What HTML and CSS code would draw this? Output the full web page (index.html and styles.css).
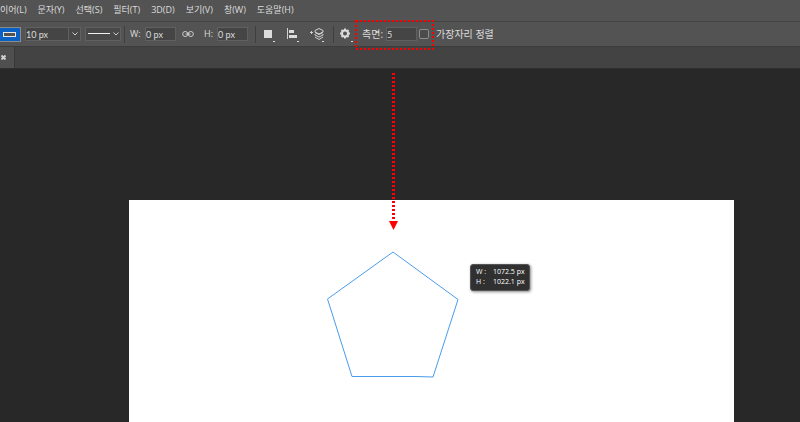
FILE: index.html
```html
<!DOCTYPE html>
<html lang="ko">
<head>
    <meta charset="UTF-8">
    <meta name="viewport" content="width=device-width, initial-scale=1.0">
    <title>다각형 도구</title>
    <link rel="stylesheet" href="styles.css">
</head>
<body>
    <nav class="menu-bar">
        <a href="#">이어(L)</a>
        <a href="#">문자(Y)</a>
        <a href="#">선택(S)</a>
        <a href="#">필터(T)</a>
        <a href="#">3D(D)</a>
        <a href="#">보기(V)</a>
        <a href="#">창(W)</a>
        <a href="#">도움말(H)</a>
    </nav>

    <div class="options-bar">
        <button class="stroke-swatch" aria-label="획"><span></span></button>
        <div class="combo">
            <input class="field" type="text" value="10 px" aria-label="획 폭">
            <button class="combo-arrow" aria-label="열기">
                <svg width="6" height="4" viewBox="0 0 6 4"><path d="M0.5 0.5 L3 3 L5.5 0.5"/></svg>
            </button>
        </div>
        <div class="line-style">
            <select aria-label="획 유형"><option></option></select>
            <svg width="31" height="8" viewBox="0 0 31 8">
                <path class="line" d="M0 3.500 H22"/>
                <path d="M25.500 2.500 L28 5 L30.500 2.500"/>
            </svg>
        </div>
        <div class="separator"></div>
        <label for="width">W:</label>
        <input class="field size" id="width" type="text" value="0 px">
        <button class="icon link" aria-label="연결">
            <svg width="12" height="8" viewBox="0 0 12 8">
                <rect x="0.700" y="1.500" width="5" height="5" rx="2.400"/>
                <rect x="6.300" y="1.500" width="5" height="5" rx="2.400"/>
                <path d="M3.500 4 H8.500"/>
            </svg>
        </button>
        <label for="height">H:</label>
        <input class="field size" id="height" type="text" value="0 px">
        <div class="separator"></div>
        <div class="tools">
            <button class="icon" aria-label="패스 작업">
                <svg width="14" height="16" viewBox="0 0 14 16">
                    <rect class="fill" x="2" y="4" width="8" height="8"/>
                    <rect class="fill" x="11" y="15" width="2" height="1"/>
                </svg>
            </button>
            <button class="icon" aria-label="패스 정렬">
                <svg width="14" height="16" viewBox="0 0 14 16">
                    <path d="M1.500 2 V13"/>
                    <rect class="fill" x="3" y="4" width="5" height="3"/>
                    <rect class="fill" x="3" y="9" width="8" height="3"/>
                    <rect class="fill" x="11" y="15" width="2" height="1"/>
                </svg>
            </button>
            <button class="icon" aria-label="패스 배열">
                <svg width="15" height="16" viewBox="0 0 15 16">
                    <path d="M0 6.500 H3 M1.500 5 V8"/>
                    <path d="M5 4.500 L9 2.500 L13 4.500 V6 L9 8 L5 6 Z"/>
                    <path d="M5 8 V9 L9 11 L13 9 V8 M5 11 L9 13.500 L13 11"/>
                    <path class="fill" d="M5 6 L9 8 L13 6 V7 L9 9 L5 7 Z"/>
                    <rect class="fill" x="12" y="15" width="2" height="1"/>
                </svg>
            </button>
        </div>
        <div class="separator"></div>
        <button class="icon gear" aria-label="설정">
            <svg width="14" height="16" viewBox="0 0 14 16">
                <circle class="ring" cx="6" cy="7.500" r="3"/>
                <path class="teeth" d="M6 2.500 V4 M6 11 V12.500 M1 7.500 H2.500 M9.500 7.500 H11 M2.500 4 L3.500 5 M8.500 10 L9.500 11 M9.500 4 L8.500 5 M3.500 10 L2.500 11"/>
                <rect class="fill" x="12" y="15" width="2" height="1"/>
            </svg>
        </button>
        <div class="sides">
            <label for="sides">측면:</label>
            <input class="field size" id="sides" type="text" value="5">
            <input class="check" id="edges" type="checkbox">
            <svg class="highlight" width="80" height="30" viewBox="0 0 80 30">
                <rect x="1" y="1" width="77" height="28"/>
            </svg>
        </div>
        <label class="wide" for="edges">가장자리 정렬</label>
    </div>

    <div class="tab-bar">
        <button class="tab" aria-label="닫기">
            <svg width="5" height="5" viewBox="0 0 5 5"><path d="M0.500 0.500 L4.500 4.500 M4.500 0.500 L0.500 4.500"/></svg>
        </button>
    </div>

    <main class="workspace">
        <div class="artboard">
            <svg class="polygon" width="134" height="128" viewBox="0 0 134 128">
                <path d="M67 1 L132 48.500 L107 126 L90 125.500 L26 125.500 L1.500 48 Z"/>
            </svg>
            <dl class="size-tip">
                <dt>W :</dt><dd>1072.5 px</dd>
                <dt>H :</dt><dd>1022.1 px</dd>
            </dl>
        </div>
        <svg class="arrow" width="10" height="160" viewBox="0 0 10 160">
            <path class="shaft" d="M4.500 3 V151"/>
            <path class="head" d="M0 151 H9 L4.500 160 Z"/>
        </svg>
    </main>
</body>
</html>
```

FILE: styles.css
```css
* {
    box-sizing: border-box;
}

body {
    margin: 0;
    height: 100vh;
    display: flex;
    flex-direction: column;
    overflow: hidden;
    background: #282828;
    color: #dcdcdc;
    font-family: "Open Sans", "Noto Sans CJK KR", sans-serif;
    font-size: 9px;
    line-height: 14px;
}

button,
input,
select {
    margin: 0;
    padding: 0;
    border: none;
    border-radius: 0;
    background: none;
    color: inherit;
    font: inherit;
}

svg {
    display: block;
    fill: none;
    stroke: #cfcfcf;
}

.fill {
    fill: #dcdcdc;
    stroke: none;
}

.menu-bar {
    height: 21px;
    padding-bottom: 2px;
    display: flex;
    align-items: center;
    gap: 11px;
    background: #535353;
    white-space: nowrap;
}

.menu-bar a {
    color: inherit;
    text-decoration: none;
}

.options-bar {
    height: 26px;
    display: flex;
    align-items: center;
    background: #535353;
    border-top: 1px solid #434343;
    border-bottom: 1px solid #3c3c3c;
    white-space: nowrap;
}

.stroke-swatch {
    width: 21px;
    height: 15px;
    border: 1px solid #8a8a8a;
    border-left: none;
    background: #0a61c4;
}

.stroke-swatch span {
    display: block;
    width: 13px;
    height: 5px;
    margin-left: 3px;
    border: 1px solid #e6e6e6;
    background: #535353;
}

.field {
    height: 14px;
    border: 1px solid #606060;
    background: #454545;
    font-family: Lato, sans-serif;
    line-height: 12px;
}

.size {
    width: 31px;
}

.combo {
    display: flex;
    margin: 0 4px;
}

.combo .field {
    width: 44px;
}

.combo-arrow {
    width: 12px;
    height: 14px;
    padding-left: 3px;
    border: 1px solid #606060;
    border-left: none;
    background: #484848;
}

.line-style {
    position: relative;
    width: 36px;
    height: 14px;
}

.line-style select {
    display: block;
    width: 100%;
    height: 100%;
    appearance: none;
    border: 1px solid #606060;
    background: #484848;
}

.line-style svg {
    position: absolute;
    top: 3px;
    left: 3px;
    pointer-events: none;
}

.line-style .line {
    stroke: #f0f0f0;
}

.separator {
    width: 1px;
    height: 17px;
    margin: 0 5px 0 3px;
    background: #3f3f3f;
}

label[for="width"] {
    width: 15px;
}

label[for="height"] {
    width: 13px;
}

.link {
    margin: 0 10px 0 6px;
}

#height {
    margin-right: 4px;
}

.tools {
    display: flex;
    gap: 10px;
    margin: 0 5px 0 1px;
}

.gear {
    margin-right: 9px;
}

.ring,
.teeth {
    stroke: #dcdcdc;
    stroke-width: 2;
}

.sides {
    position: relative;
    display: flex;
    align-items: center;
    margin-right: 7px;
}

.sides label,
.wide {
    font-size: 10px;
}

.sides label {
    width: 24px;
}

.check {
    width: 10px;
    height: 10px;
    margin-left: 2px;
    appearance: none;
    border: 1px solid #8c8c8c;
    border-radius: 2px;
    background: #4b4b4b;
}

.highlight {
    position: absolute;
    top: -7px;
    left: -7px;
    pointer-events: none;
}

.highlight rect,
.shaft {
    stroke: #f00;
    stroke-width: 3;
    stroke-dasharray: 2 2;
}

.highlight rect {
    stroke-width: 2;
}

.tab-bar {
    height: 22px;
    display: flex;
    background: #434343;
    border-bottom: 1px solid #303030;
}

.tab {
    width: 15px;
    padding-left: 1px;
    background: #4f4f4f;
    border-right: 1px solid #383838;
}

.tab svg {
    stroke-width: 2;
}

.workspace {
    position: relative;
    flex: 1;
    display: flex;
    padding: 131px 66px 0 129px;
}

.artboard {
    position: relative;
    flex: 1;
    background: #fff;
}

.polygon {
    position: absolute;
    top: 51px;
    left: 197px;
    stroke: #4a9cec;
}

.size-tip {
    position: absolute;
    top: 64px;
    left: 341px;
    width: 60px;
    margin: 0;
    padding: 2px 0 3px 5px;
    display: grid;
    grid-template-columns: 17px 1fr;
    border: 1px solid #555;
    border-radius: 3px;
    background: #303030;
    box-shadow: 1px 1px 3px #888;
    color: #fff;
    font-size: 7px;
    line-height: 10px;
    white-space: nowrap;
}

.size-tip dd {
    margin: 0;
}

.arrow {
    position: absolute;
    top: 1px;
    left: 389px;
}

.head {
    fill: #f00;
    stroke: none;
}
```
